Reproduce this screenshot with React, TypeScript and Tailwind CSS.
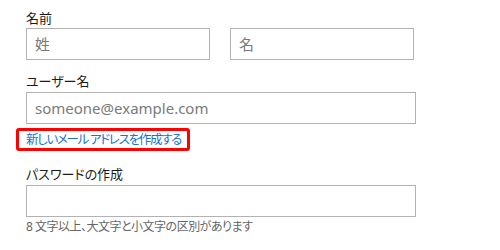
export default function App() {
	return (
		<div className="h-[250px] w-[500px] bg-white pl-[26px] pt-[9px] font-['Noto_Sans','Noto_Sans_CJK_JP',sans-serif] [font-feature-settings:'palt'] text-[#1b1b1b]">
			<div className="text-[13px] leading-[18px]">名前</div>
			<div className="mt-[1px] flex gap-[20px]">
				<input
					className="h-[32px] w-[184px] border border-[#b2b2b2] px-[8px] text-[15px] outline-none placeholder:text-[#7a7a7a]"
					placeholder="姓"
				/>
				<input
					className="h-[32px] w-[184px] border border-[#b2b2b2] px-[8px] text-[15px] outline-none placeholder:text-[#7a7a7a]"
					placeholder="名"
				/>
			</div>

			<div className="mt-[12px] text-[13px] leading-[18px]">ユーザー名</div>
			<input
				className="mt-[2px] block h-[32px] w-[390px] border border-[#b2b2b2] px-[8px] text-[15px] outline-none placeholder:text-[#7a7a7a]"
				placeholder="someone@example.com"
			/>

			<div className="-ml-[10px] mt-[4px] flex">
				<a
					href="#"
					className="rounded-[3px] border-[3px] border-[#ff0000] pl-[7px] pr-[6px] text-[12.5px] leading-[17px] tracking-[-1.3px] text-[#1a6fd0]"
				>
					新しいメール アドレスを作成する
				</a>
			</div>

			<div className="mt-[14px] text-[13px] leading-[18px]">パスワードの作成</div>
			<input
				type="password"
				className="mt-[2px] block h-[32px] w-[390px] border border-[#b2b2b2] px-[8px] text-[15px] outline-none"
			/>
			<div className="mt-[2px] text-[12px] leading-[16px] tracking-[-0.5px] text-[#666666]">
				8 文字以上、大文字と小文字の区別があります
			</div>
		</div>
	);
}
